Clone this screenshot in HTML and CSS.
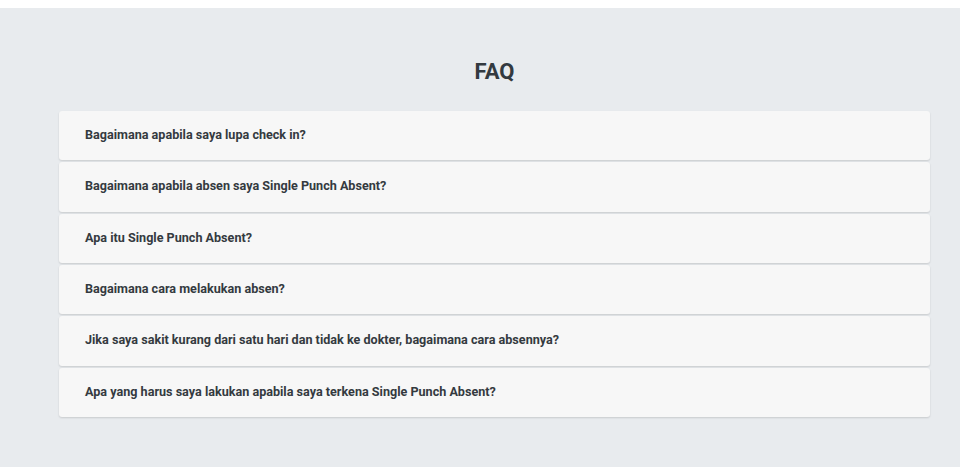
FILE: index.html
```html
<!DOCTYPE html>
<html lang="id">
<head>
<meta charset="utf-8">
<title>FAQ</title>
<link rel="stylesheet" href="styles.css">
</head>
<body>
<section class="faq">
  <h2 class="faq-title">FAQ</h2>
  <div class="faq-list">
    <div class="faq-item">Bagaimana apabila saya lupa check in?</div>
    <div class="faq-item">Bagaimana apabila absen saya Single Punch Absent?</div>
    <div class="faq-item">Apa itu Single Punch Absent?</div>
    <div class="faq-item">Bagaimana cara melakukan absen?</div>
    <div class="faq-item">Jika saya sakit kurang dari satu hari dan tidak ke dokter, bagaimana cara absennya?</div>
    <div class="faq-item">Apa yang harus saya lakukan apabila saya terkena Single Punch Absent?</div>
  </div>
</section>
</body>
</html>
```
FILE: styles.css
```css
html, body {
  margin: 0;
  padding: 0;
  background: #ffffff;
  font-family: Roboto, "Liberation Sans", sans-serif;
}
body {
  padding-top: 8px;
}
.faq {
  background: #e8ebee;
  min-height: 459px;
  padding: 51px 30px 40px 59px;
  box-sizing: border-box;
}
.faq-title {
  margin: 0 0 26px 0;
  width: 871px;
  text-align: center;
  font-size: 22px;
  line-height: 26px;
  font-weight: 700;
  color: #333a40;
}
.faq-list {
  width: 871px;
  display: flex;
  flex-direction: column;
  gap: 2px;
}
.faq-item {
  background: #f7f7f7;
  border-radius: 3px;
  box-shadow: 0 1px 2px rgba(0, 0, 0, 0.14);
  padding: 15px 26px 17px 26px;
  font-size: 12.6px;
  line-height: 17.33px;
  font-weight: 700;
  color: #343a40;
}
```
